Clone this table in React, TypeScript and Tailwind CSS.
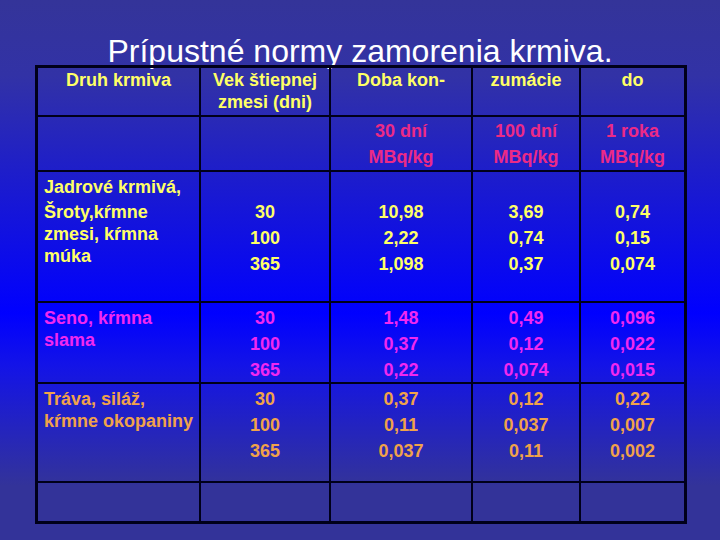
const yellow = "text-[#ffff66]";
const pink = "text-[#ec2a86]";
const magenta = "text-[#f028f0]";
const orange = "text-[#f0a24a]";

const cell = "border-r-2 border-b-2 border-[#00001a]";
const lastCol = "border-b-2 border-[#00001a]";

type Group = {
  label: string[][];
  ages: string[];
  cols: string[][];
  color: string;
  numPad: string;
  height: string;
};

const groups: Group[] = [
  {
    label: [["Jadrové krmivá,"], ["Šroty,kŕmne", "zmesi, kŕmna", "múka"]],
    ages: ["30", "100", "365"],
    cols: [
      ["10,98", "2,22", "1,098"],
      ["3,69", "0,74", "0,37"],
      ["0,74", "0,15", "0,074"],
    ],
    color: yellow,
    numPad: "pt-[27px]",
    height: "h-[131px]",
  },
  {
    label: [["Seno, kŕmna", "slama"]],
    ages: ["30", "100", "365"],
    cols: [
      ["1,48", "0,37", "0,22"],
      ["0,49", "0,12", "0,074"],
      ["0,096", "0,022", "0,015"],
    ],
    color: magenta,
    numPad: "pt-[2px]",
    height: "h-[81px]",
  },
  {
    label: [["Tráva, siláž,", "kŕmne okopaniny"]],
    ages: ["30", "100", "365"],
    cols: [
      ["0,37", "0,11", "0,037"],
      ["0,12", "0,037", "0,11"],
      ["0,22", "0,007", "0,002"],
    ],
    color: orange,
    numPad: "pt-[2px]",
    height: "h-[99px]",
  },
];

function Numbers({ values, className }: { values: string[]; className: string }) {
  return (
    <div className={`flex flex-col items-center leading-[26px] ${className}`}>
      {values.map((v, i) => (
        <span key={i}>{v}</span>
      ))}
    </div>
  );
}

export default function App() {
  return (
    <div
      className="w-[720px] h-[540px] overflow-hidden pt-[35px] bg-[linear-gradient(to_bottom,#343499_0%,#3232a6_14%,#0000ff_58%,#1414e6_68%,#333399_90%,#333399_100%)]"
      style={{ fontFamily: '"Liberation Sans", Arial, sans-serif' }}
    >
      <h1 className="h-[30px] text-center text-[32px] leading-[32px] font-normal text-white">
        Prípustné normy zamorenia krmiva.
      </h1>

      <div className="relative ml-[35px] w-[652px] border-[3px] border-[#00001a] grid grid-cols-[163px_130px_142px_108px_103px] text-[18px] font-bold">
        {/* header */}
        <div className={`${cell} h-[49px] pt-[1px] text-center leading-[22px] ${yellow}`}>Druh krmiva</div>
        <div className={`${cell} h-[49px] pt-[1px] text-center leading-[22px] ${yellow}`}>
          Vek štiepnej
          <br />
          zmesi (dni)
        </div>
        <div className={`${cell} h-[49px] pt-[1px] text-center leading-[22px] ${yellow}`}>Doba kon-</div>
        <div className={`${cell} h-[49px] pt-[1px] text-center leading-[22px] ${yellow}`}>zumácie</div>
        <div className={`${lastCol} h-[49px] pt-[1px] text-center leading-[22px] ${yellow}`}>do</div>

        {/* units */}
        <div className={`${cell} h-[55px]`} />
        <div className={`${cell} h-[55px]`} />
        {[
          ["30 dní", "MBq/kg"],
          ["100 dní", "MBq/kg"],
          ["1 roka", "MBq/kg"],
        ].map((u, i) => (
          <div key={i} className={`${i === 2 ? lastCol : cell} h-[55px] pt-[1px]`}>
            <Numbers values={u} className={pink} />
          </div>
        ))}

        {/* data */}
        {groups.map((g, gi) => (
          <div key={gi} className="contents">
            <div className={`${cell} ${g.height} pl-[6px] pt-[4px] leading-[22px] ${g.color}`}>
              {g.label.map((p, pi) => (
                <div key={pi} className={pi > 0 ? "mt-[3px]" : ""}>
                  {p.map((line, li) => (
                    <div key={li}>{line}</div>
                  ))}
                </div>
              ))}
            </div>
            <div className={`${cell} ${g.height} ${g.numPad}`}>
              <Numbers values={g.ages} className={g.color} />
            </div>
            {g.cols.map((c, ci) => (
              <div key={ci} className={`${ci === 2 ? lastCol : cell} ${g.height} ${g.numPad}`}>
                <Numbers values={c} className={g.color} />
              </div>
            ))}
          </div>
        ))}

        {/* empty last row */}
        <div className="border-r-2 border-[#00001a] h-[38px]" />
        <div className="border-r-2 border-[#00001a] h-[38px]" />
        <div className="border-r-2 border-[#00001a] h-[38px]" />
        <div className="border-r-2 border-[#00001a] h-[38px]" />
        <div className="h-[38px]" />
      </div>
    </div>
  );
}
